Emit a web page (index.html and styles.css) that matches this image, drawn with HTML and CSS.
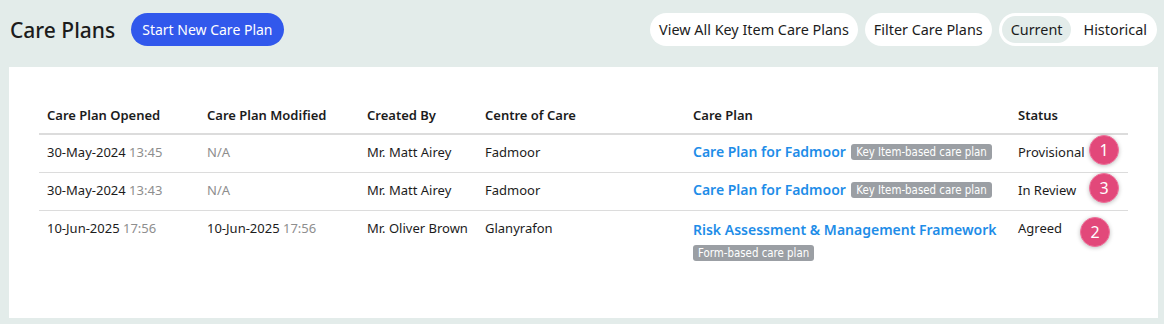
FILE: index.html
```html
<!DOCTYPE html>
<html lang="en">
<head>
    <meta charset="UTF-8">
    <meta name="viewport" content="width=device-width, initial-scale=1.0">
    <title>Care Plans</title>
    <link rel="stylesheet" href="styles.css">
</head>
<body>
    <div class="top-bar">
        <h1 class="page-title">Care Plans</h1>
        <button type="button" class="btn-primary">Start New Care Plan</button>
        <div class="top-actions">
            <button type="button" class="btn-pill">View All Key Item Care Plans</button>
            <button type="button" class="btn-pill">Filter Care Plans</button>
            <div class="toggle">
                <button type="button" class="toggle-item active">Current</button>
                <button type="button" class="toggle-item">Historical</button>
            </div>
        </div>
    </div>

    <div class="panel">
        <table class="plans-table">
            <thead>
                <tr>
                    <th>Care Plan Opened</th>
                    <th>Care Plan Modified</th>
                    <th>Created By</th>
                    <th>Centre of Care</th>
                    <th>Care Plan</th>
                    <th>Status</th>
                </tr>
            </thead>
            <tbody>
                <tr>
                    <td>30-May-2024 <span class="time">13:45</span></td>
                    <td class="muted">N/A</td>
                    <td>Mr. Matt Airey</td>
                    <td>Fadmoor</td>
                    <td><a href="#" class="plan-link">Care Plan for Fadmoor</a> <span class="tag tag-inline">Key Item-based care plan</span></td>
                    <td class="status">Provisional <span class="marker">1</span></td>
                </tr>
                <tr>
                    <td>30-May-2024 <span class="time">13:43</span></td>
                    <td class="muted">N/A</td>
                    <td>Mr. Matt Airey</td>
                    <td>Fadmoor</td>
                    <td><a href="#" class="plan-link">Care Plan for Fadmoor</a> <span class="tag tag-inline">Key Item-based care plan</span></td>
                    <td class="status">In Review <span class="marker">3</span></td>
                </tr>
                <tr>
                    <td>10-Jun-2025 <span class="time">17:56</span></td>
                    <td>10-Jun-2025 <span class="time">17:56</span></td>
                    <td>Mr. Oliver Brown</td>
                    <td>Glanyrafon</td>
                    <td><a href="#" class="plan-link block-link">Risk Assessment &amp; Management Framework</a><span class="tag">Form-based care plan</span></td>
                    <td class="status">Agreed <span class="marker marker-low">2</span></td>
                </tr>
            </tbody>
        </table>
    </div>
</body>
</html>
```

FILE: styles.css
```css
body {
    background-color: #e3ecea;
    font-family: "Noto Sans", Arial, sans-serif;
    color: #1c1c1c;
    margin: 0;
    padding: 0;
}

.top-bar {
    display: flex;
    align-items: center;
    padding: 13px 7px 0 10px;
    height: 33px;
}

.page-title {
    font-size: 21px;
    font-weight: 500;
    margin: 0 16px 0 0;
}

button {
    font-family: inherit;
    font-size: 14px;
    color: #1c1c1c;
    border: none;
    cursor: pointer;
    height: 33px;
    border-radius: 17px;
    padding: 0 10px;
    white-space: nowrap;
}

.btn-primary {
    background-color: #3158ec;
    color: #fff;
    padding: 0 11px;
}

.top-actions {
    margin-left: auto;
    display: flex;
    gap: 7px;
}

.btn-pill {
    background-color: #fff;
    padding: 0 9px;
    font-size: 14.4px;
}

.toggle {
    display: flex;
    align-items: center;
    background-color: #fff;
    border-radius: 17px;
    height: 33px;
    padding: 0 1px 0 3px;
    gap: 3px;
}

.toggle-item {
    background: transparent;
    height: 27px;
    border-radius: 14px;
    padding: 0 9px;
    font-size: 14.4px;
}

.toggle-item.active {
    background-color: #e3ecea;
}

.panel {
    background-color: #fff;
    margin: 21px 6px 6px 9px;
    padding: 30px 30px 45px 30px;
}

.plans-table {
    width: 100%;
    border-collapse: collapse;
    table-layout: fixed;
    font-size: 13px;
}

.plans-table th {
    text-align: left;
    font-weight: 600;
    padding: 8px;
    line-height: 20px;
    border-bottom: 2px solid #dcdcdc;
}

.plans-table td {
    padding: 7px 8px 10px;
    line-height: 20px;
    vertical-align: top;
    border-bottom: 1px solid #dcdcdc;
}

.plans-table tbody tr:last-child td {
    border-bottom: none;
}

.plans-table th:nth-child(1) { width: 144px; }
.plans-table th:nth-child(2) { width: 144px; }
.plans-table th:nth-child(3) { width: 102px; }
.plans-table th:nth-child(4) { width: 192px; }
.plans-table th:nth-child(5) { width: 309px; }

.time,
.muted {
    color: #8e8e8e;
}

.plan-link {
    color: #1e8de8;
    font-weight: 600;
    font-size: 14px;
    text-decoration: none;
}

.block-link {
    display: block;
    line-height: 24px;
    margin-bottom: 1px;
}

.tag {
    display: inline-block;
    background-color: #9b9fa4;
    color: #fff;
    font-family: "DejaVu Sans Condensed", "DejaVu Sans", sans-serif;
    font-stretch: condensed;
    font-size: 11.4px;
    line-height: 16px;
    padding: 0 5px;
    border-radius: 3px;
    vertical-align: 1px;
}

.tag-inline {
    margin-left: 2px;
}

.status {
    position: relative;
}

.marker {
    position: absolute;
    left: 79px;
    top: 0;
    width: 28px;
    height: 28px;
    border-radius: 50%;
    background-color: #e2487a;
    border: 1px solid #f0709a;
    box-shadow: 0 1px 4px rgba(0, 0, 0, 0.25);
    color: #fff;
    font-size: 16px;
    line-height: 28px;
    text-align: center;
}

.marker-low {
    left: 70px;
    top: 6px;
}
```
